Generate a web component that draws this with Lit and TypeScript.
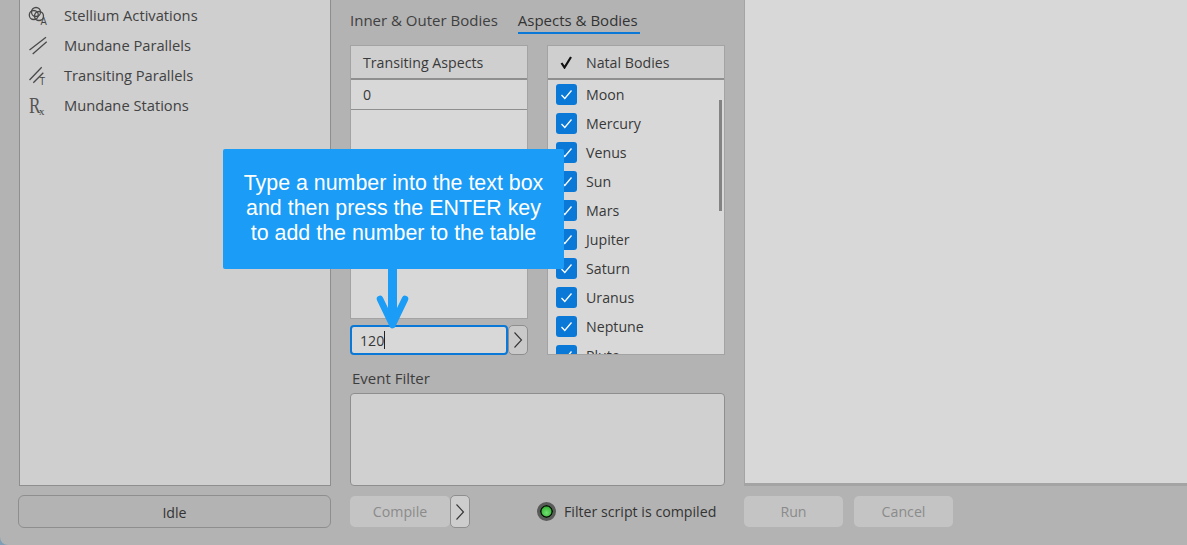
import { LitElement, html, css, svg } from "lit";
import { customElement } from "lit/decorators.js";

const BODIES = ["Moon", "Mercury", "Venus", "Sun", "Mars", "Jupiter", "Saturn", "Uranus", "Neptune", "Pluto"];

const ICONS = [
  svg`<circle cx="7" cy="9" r="4.500" /><circle cx="4.800" cy="12" r="4.500" /><circle cx="10" cy="13" r="4.500" /><text x="11.500" y="22" class="ic-t">A</text>`,
  svg`<path d="M.5 17 17 4.300M3.700 21 17.700 8.700" />`,
  svg`<path d="M.5 17 12.700 4.300M4.300 19.700 14.300 9.700" /><text x="10.500" y="21.500" class="ic-t">T</text>`,
  svg`<text x="0" y="20" class="ic-r" transform="translate(0 20) scale(.72 1) translate(0 -20)">R</text><text x="10" y="22" class="ic-x">x</text>`,
];
const ITEMS = ["Stellium Activations", "Mundane Parallels", "Transiting Parallels", "Mundane Stations"];

@customElement("app-root")
export class AppRoot extends LitElement {
  static styles = css`
    :host {
      display: block;
      width: 1187px;
      height: 545px;
      overflow: hidden;
      background: #7f9fb8;
      font-family: "Open Sans", "Noto Sans", sans-serif;
      font-size: 14.200px;
      color: #383838;
    }
    .win {
      position: relative;
      box-sizing: border-box;
      width: 1187px;
      height: 545px;
      padding-left: 18px;
      background: #b3b3b3;
      border-bottom-left-radius: 8px;
      display: grid;
      grid-template-columns: 313px 375px 443px;
      grid-template-rows: 486px 33px;
      column-gap: 19px;
      row-gap: 9px;
    }
    .list {
      margin-left: 1px;
      background: #cfcfcf;
      border: 1px solid #8e8e8e;
      border-top: 0;
    }
    .item {
      height: 30px;
      display: flex;
      align-items: center;
      padding-left: 9px;
      gap: 11px;
      color: #424242;
      font-size: 14.700px;
    }
    .item span { white-space: nowrap; }
    .item svg { width: 24px; height: 24px; flex: none; overflow: visible; }
    .item svg circle, .item svg path {
      fill: none;
      stroke: #4a4a4a;
      stroke-width: 1.300;
    }
    .ic-t { font: 10px "Open Sans", sans-serif; fill: #444; stroke: none; }
    .ic-r { font: 24px "Liberation Serif", serif; fill: #555; }
    .ic-x { font: 11px "Liberation Serif", serif; fill: #444; }

    .mid { display: flex; flex-direction: column; min-width: 0; }
    .tabs { display: flex; gap: 20px; height: 34px; padding-top: 10px; box-sizing: border-box; flex: none; font-size: 15px; }
    .tab { height: 24px; line-height: 20px; color: #404040; box-sizing: border-box; }
    .tab.on { border-bottom: 2px solid #0a78d7; color: #333; padding-right: 2px; }
    .tables {
      margin-top: 11px;
      display: grid;
      grid-template-columns: 178px 178px;
      grid-template-rows: 310px;
      column-gap: 19px;
      flex: none;
    }
    .tcol { display: flex; flex-direction: column; gap: 6px; min-height: 0; }
    .tbl {
      flex: 1;
      min-height: 0;
      box-sizing: border-box;
      position: relative;
      overflow: hidden;
      background: #d8d8d8;
      border: 1px solid #a3a3a3;
    }
    .th {
      height: 32px;
      box-sizing: content-box;
      background: #cfcfcf;
      border-bottom: 2px solid #8f8f8f;
      display: flex;
      align-items: center;
      padding-left: 12px;
      color: #3a3a3a;
    }
    .th.n { gap: 13px; }
    .th .ck { width: 13px; }
    .th .ck svg { display: block; width: 13px; height: 13px; }
    .r0 {
      height: 29px;
      border-bottom: 1px solid #8f8f8f;
      display: flex;
      align-items: center;
      padding-left: 12px;
    }
    .inrow { display: flex; height: 30px; flex: none; }
    .inp {
      box-sizing: border-box;
      width: 158px;
      height: 30px;
      border: 2px solid #0a78d7;
      border-radius: 4px;
      background: #d8d8d8;
      padding-left: 8px;
      display: flex;
      align-items: center;
    }
    .caret { width: 1px; height: 18px; background: #222; }
    .chev {
      box-sizing: border-box;
      width: 20px;
      height: 30px;
      border: 1px solid #8e8e8e;
      border-radius: 5px;
      background: #c9c9c9;
      display: flex;
      align-items: center;
      justify-content: center;
    }
    .chev svg { width: 10px; height: 16px; fill: none; stroke: #333; stroke-width: 1.100; }
    .rows { padding: 4px 0 0 8px; }
    .row { height: 29px; display: flex; align-items: flex-start; gap: 9px; }
    .box {
      width: 21px;
      height: 21px;
      flex: none;
      background: #0a78d7;
      border-radius: 3px;
      display: flex;
      align-items: center;
      justify-content: center;
    }
    .box svg { width: 13px; height: 11px; fill: none; stroke: #fff; stroke-width: 1.300; }
    .row span { line-height: 21px; }
    .sb {
      position: absolute;
      left: 171px;
      top: 54px;
      width: 3px;
      height: 111px;
      background: #838383;
    }
    .lab { margin-top: 14px; padding-left: 2px; height: 24px; line-height: 19px; box-sizing: border-box; flex: none; color: #3d3d3d; font-size: 15px; }
    .ta {
      flex: 1;
      background: #d0d0d0;
      border: 1px solid #8e8e8e;
      border-radius: 4px;
    }
    .side {
      background: #d8d8d8;
      border-bottom: 3px solid #a4a4a4;
      border-left: 1px solid #a4a4a4;
      height: 486px;
      box-sizing: border-box;
    }
    .bar { display: flex; align-items: center; }
    .idle {
      box-sizing: border-box;
      width: 313px;
      height: 33px;
      border: 1px solid #8e8e8e;
      border-radius: 6px;
      padding-top: 1px;
      display: flex;
      align-items: center;
      justify-content: center;
      color: #333;
    }
    .dis {
      box-sizing: border-box;
      width: 100px;
      height: 31px;
      border-radius: 5px;
      background: #c4c4c4;
      color: #8b8b8b;
      display: flex;
      align-items: center;
      justify-content: center;
    }
    .g11 .dis { width: 99px; }
    .chev.b { height: 33px; background: #cdcdcd; }
    .led {
      box-sizing: border-box;
      margin-left: 67px;
      width: 19px;
      height: 19px;
      border-radius: 50%;
      border: 3px solid #5a5a5a;
      background: radial-gradient(circle at 50% 60%, #72e272, #1b9e1b 85%);
      box-shadow: inset 0 0 0 1.500px #0c0c0c;
    }
    .ltxt { margin-left: 8px; color: #333; white-space: nowrap; }
    .g11 { gap: 11px; }
    .call {
      position: absolute;
      left: 223px;
      top: 149px;
      width: 341px;
      height: 120px;
      box-sizing: border-box;
      padding-top: 22px;
      border-radius: 2px;
      background: #1a9cf7;
      color: #fff;
      font: 21.400px/25px "Liberation Sans", Arial, sans-serif;
      text-align: center;
    }
    .arrow { position: absolute; left: 370px; top: 265px; width: 44px; height: 70px; overflow: visible; }
    .arrow path { fill: none; stroke: #1a9cf7; stroke-linecap: round; stroke-linejoin: round; }
    .arrow .stem { stroke-width: 9px; stroke-linecap: butt; }
    .arrow .head { stroke-width: 6.500px; }
  `;

  private chev() {
    return html`<svg viewBox="0 0 10 16"><path d="M1.500 .5 8.500 8 1.500 15.500" /></svg>`;
  }

  render() {
    return html`
      <div class="win">
        <div class="list">
          ${ITEMS.map(
            (t, i) => html`<div class="item"><svg viewBox="0 0 24 24">${ICONS[i]}</svg><span>${t}</span></div>`
          )}
        </div>
        <div class="mid">
          <div class="tabs">
            <div class="tab">Inner &amp; Outer Bodies</div>
            <div class="tab on">Aspects &amp; Bodies</div>
          </div>
          <div class="tables">
            <div class="tcol">
              <div class="tbl">
                <div class="th">Transiting Aspects</div>
                <div class="r0">0</div>
              </div>
              <div class="inrow">
                <div class="inp">120<i class="caret"></i></div>
                <div class="chev">${this.chev()}</div>
              </div>
            </div>
            <div class="tcol">
              <div class="tbl">
                <div class="th n">
                  <span class="ck"><svg viewBox="0 0 13 13"><path d="M1.500 7 4.500 11.500 11 1" fill="none" stroke="#111" stroke-width="2.200" /></svg></span>
                  <span>Natal Bodies</span>
                </div>
                <div class="rows">
                  ${BODIES.map(
                    (b) => html`<div class="row">
                      <div class="box"><svg viewBox="0 0 13 11"><path d="M1.500 6 4.800 9.500 11.500 1.500" /></svg></div>
                      <span>${b}</span>
                    </div>`
                  )}
                </div>
                <div class="sb"></div>
              </div>
            </div>
          </div>
          <div class="lab">Event Filter</div>
          <div class="ta"></div>
        </div>
        <div class="side"></div>
        <div class="bar"><div class="idle">Idle</div></div>
        <div class="bar">
          <div class="dis">Compile</div>
          <div class="chev b">${this.chev()}</div>
          <div class="led"></div>
          <div class="ltxt">Filter script is compiled</div>
        </div>
        <div class="bar g11">
          <div class="dis">Run</div>
          <div class="dis">Cancel</div>
        </div>
        <div class="call">Type a number into the text box<br />and then press the ENTER key<br />to add the number to the table</div>
        <svg class="arrow" viewBox="0 0 44 70"><path class="stem" d="M22.500 0V58" /><path class="head" d="M10 34 22.500 60 35 34" /></svg>
      </div>
    `;
  }
}
